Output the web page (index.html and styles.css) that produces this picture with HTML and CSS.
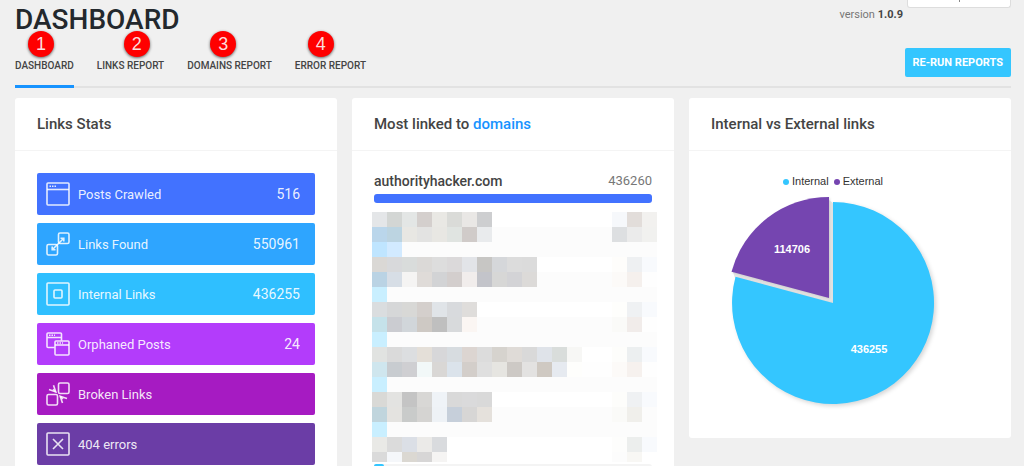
FILE: index.html
```html
<!DOCTYPE html>
<html lang="en">
<head>
<meta charset="utf-8">
<meta name="viewport" content="width=device-width, initial-scale=1">
<title>Dashboard</title>
<link rel="stylesheet" href="styles.css">
</head>
<body>
<header class="top">
  <h1 class="title">DASHBOARD</h1>
  <div class="meta">
    <span class="version">version <b>1.0.9</b></span>
    <button class="ghost" type="button" aria-label="More"></button>
  </div>
</header>

<div class="bar">
  <nav class="tabs">
    <a class="tab active" href="#dashboard"><span class="badge b1">1</span>DASHBOARD</a>
    <a class="tab" href="#links"><span class="badge b2">2</span>LINKS REPORT</a>
    <a class="tab" href="#domains"><span class="badge b3">3</span>DOMAINS REPORT</a>
    <a class="tab" href="#errors"><span class="badge b4">4</span>ERROR REPORT</a>
  </nav>
  <button class="primary" type="button">RE-RUN REPORTS</button>
</div>

<main class="cards">
  <section class="card">
    <h2 class="card-head">Links Stats</h2>
    <ul class="card-body stats">
      <li class="stat posts">
        <svg class="icon" viewBox="0 0 24 24"><rect x="1" y="1" width="22" height="22" rx="1"/><path d="M1 7.500H23"/><path d="M3.500 4.300H10" stroke-dasharray="1.500 1"/></svg>
        <span>Posts Crawled</span><span class="count">516</span>
      </li>
      <li class="stat found">
        <svg class="icon" viewBox="0 0 24 24"><rect x="12.500" y="1" width="10.500" height="10.500" rx="1.500"/><rect x="1" y="12.500" width="10.500" height="10.500" rx="1.500"/><path d="M6 18L18 6M14.500 6.200H17.800V9.500M6.200 14.500V17.800H9.500"/></svg>
        <span>Links Found</span><span class="count">550961</span>
      </li>
      <li class="stat internal">
        <svg class="icon" viewBox="0 0 24 24"><rect x="1" y="1" width="22" height="22" rx="1"/><rect x="8" y="8" width="8" height="8" rx="1"/></svg>
        <span>Internal Links</span><span class="count">436255</span>
      </li>
      <li class="stat orphaned">
        <svg class="icon" viewBox="0 0 24 24"><path d="M8.500 15.500H2a1 1 0 0 1-1-1V2a1 1 0 0 1 1-1H14.500a1 1 0 0 1 1 1V8.500M1 5.500H15.500"/><path d="M3 3.300H9M11 11H17" stroke-dasharray="1.500 1"/><rect x="9" y="9" width="14" height="14" rx="1"/><path d="M9 13H23"/></svg>
        <span>Orphaned Posts</span><span class="count">24</span>
      </li>
      <li class="stat broken">
        <svg class="icon" viewBox="0 0 24 24"><rect x="12.500" y="1" width="10.500" height="10.500" rx="1.500"/><rect x="1" y="12.500" width="10.500" height="10.500" rx="1.500"/><path d="M3 7.500L9.800 10L7.500 3.200M21 16.500L14.200 14.300L16.500 21"/><path d="M9.800 10L7 7.200M14.200 14.300L17 17"/></svg>
        <span>Broken Links</span>
      </li>
      <li class="stat missing">
        <svg class="icon" viewBox="0 0 24 24"><rect x="1" y="1" width="22" height="22" rx="1"/><path d="M7 7L17 17M17 7L7 17"/></svg>
        <span>404 errors</span>
      </li>
    </ul>
  </section>

  <section class="card">
    <h2 class="card-head">Most linked to <a href="#domains">domains</a></h2>
    <div class="card-body">
      <div class="domain"><b>authorityhacker.com</b><span>436260</span></div>
      <div class="meter full"></div>
      <svg class="mosaic" viewBox="0 0 285 250" shape-rendering="crispEdges" aria-hidden="true"></svg>
      <div class="meter small"><div class="fill"></div></div>
    </div>
  </section>

  <section class="card">
    <h2 class="card-head">Internal vs External links</h2>
    <div class="card-body">
      <div class="chart">
        <div class="legend"><span class="key in">Internal</span><span class="key ex">External</span></div>
        <svg class="pie" viewBox="0 0 244 226" role="img" aria-label="Internal 436255, External 114706">
          <path class="gap" d="M118 10L122 13L124 114L24 88L22 82L112 100Z"/>
          <path class="slice-in" d="M122 113V12A101 101 0 1 1 24.500 86.800Z"/>
          <path class="slice-ex" d="M118 108L20.500 81.800A101 101 0 0 1 118 7Z"/>
          <text x="81" y="63">114706</text>
          <text x="158" y="163">436255</text>
        </svg>
      </div>
    </div>
  </section>
</main>
<script src="mosaic.js"></script>
</body>
</html>
```

FILE: styles.css
```css
* { box-sizing: border-box; }

body {
  margin: 0;
  padding: 0 13px 0 15px;
  background: #f0f0f0;
  color: #444;
  font-family: Roboto, "Liberation Sans", sans-serif;
  font-size: 14px;
}

a { text-decoration: none; }

button { font: inherit; border: 0; }

.top {
  display: flex;
  justify-content: space-between;
  height: 39px;
}

.title {
  margin: 0;
  font-size: 28px;
  line-height: 39px;
  font-weight: 500;
  color: #23282d;
}

.meta {
  display: flex;
  align-items: flex-start;
  gap: 4px;
}

.version {
  padding-top: 7px;
  font-size: 11px;
  line-height: 16px;
  color: #777;
}

.version b { color: #444; font-weight: 700; }

.ghost {
  display: flex;
  justify-content: center;
  width: 104px;
  height: 8px;
  padding: 0;
  background: #fff;
  border: 1px solid #ddd;
  border-top: 0;
  border-radius: 0 0 3px 3px;
}

.ghost::before {
  content: "";
  width: 1px;
  height: 2px;
  background: #888;
}

.bar {
  display: flex;
  justify-content: space-between;
  align-items: center;
  height: 49px;
  border-bottom: 2px solid #e2e2e2;
}

.tabs {
  display: flex;
  align-self: stretch;
  gap: 23px;
  margin-bottom: -2px;
}

.tab {
  position: relative;
  padding-top: 19px;
  font-size: 10px;
  line-height: 16px;
  font-weight: 500;
  color: #444;
  white-space: nowrap;
}

.active { border-bottom: 3px solid #1793ff; }

.badge {
  position: absolute;
  top: -8px;
  width: 26px;
  height: 26px;
  border-radius: 50%;
  background: #f00;
  box-shadow: 0 1px 3px rgba(0, 0, 0, .6);
  color: #fbdcdc;
  font: 18px/26px "Liberation Sans", Arial, sans-serif;
  text-align: center;
}

.b1, .b4 { left: 13px; }
.b2 { left: 27px; }
.b3 { left: 23px; }

.primary {
  min-width: 106px;
  height: 29px;
  padding: 0 8px;
  border-radius: 2px;
  background: #34c6ff;
  color: #fff;
  font-size: 11px;
  font-weight: 700;
}

.cards {
  display: grid;
  grid-template-columns: repeat(3, minmax(0, 1fr));
  align-items: start;
  gap: 15px;
  padding-top: 10px;
}

.card {
  background: #fff;
  border-radius: 3px;
}

.card-head {
  margin: 0;
  padding: 16px 22px;
  border-bottom: 1px solid #f4f4f4;
  font-size: 15px;
  line-height: 20px;
  font-weight: 500;
}

.card-head a { color: #1793ff; }

.card-body {
  margin: 0;
  padding: 22px;
}

.stats {
  display: flex;
  flex-direction: column;
  gap: 8px;
  list-style: none;
}

.stat {
  display: flex;
  align-items: center;
  gap: 8px;
  height: 42px;
  padding: 0 15px 0 9px;
  border-radius: 2px;
  color: rgba(255, 255, 255, .9);
  font-size: 13px;
}

.count { margin-left: auto; font-size: 14px; }

.icon {
  width: 24px;
  height: 24px;
  fill: none;
  stroke: #fff;
  stroke-opacity: .85;
  stroke-width: 1.6;
}

.posts { background: #4272ff; }
.found { background: #2ea5ff; }
.internal { background: #2fbfff; }
.orphaned { background: #b33cfb; }
.broken { background: #a61bc2; }
.missing { background: #6b3da6; }

.domain {
  display: flex;
  justify-content: space-between;
  line-height: 16px;
  font-size: 13px;
}

.domain b { font-size: 14px; font-weight: 500; }
.domain span { color: #777; }

.meter { border-radius: 3px; background: #f4f4f4; }
.full { height: 9px; margin: 5px 0 9px; background: #4272ff; }
.small { height: 9px; margin-top: 2px; }
.fill { width: 10px; height: 9px; border-radius: 2px; background: #34c6ff; }

.mosaic {
  display: block;
  width: 285px;
  height: 250px;
  margin: 0 -6px 0 -2px;
}

.chart { width: 244px; max-width: 100%; }

.legend {
  display: flex;
  justify-content: center;
  gap: 5px;
  font: 11px/16px "Liberation Sans", Arial, sans-serif;
  color: #333;
}

.key { display: flex; align-items: center; gap: 3px; }

.key::before {
  content: "";
  width: 6px;
  height: 6px;
  margin-top: 2px;
  border-radius: 50%;
}

.in::before { background: #34c6ff; }
.ex::before { background: #7545b0; }

.pie { display: block; width: 100%; margin-top: 1px; overflow: visible; }
.gap { fill: #e6e6e6; }
.slice-in { fill: #34c6ff; filter: drop-shadow(2px 2px 2px rgba(0, 0, 0, .16)); }
.slice-ex { fill: #7545b0; filter: drop-shadow(1px 1px 1px rgba(0, 0, 0, .12)); }

.pie text {
  fill: #fff;
  font: bold 11px "Liberation Sans", Arial, sans-serif;
  text-anchor: middle;
}
```

FILE: mosaic.js
```js
// Redacted domain rows: leading cells | strip colour | last three cells.
const rows = [
  "e4e6e8 d3d6d4 e3e6e5 d4cfcd e9e8e4 dadbd8 e9e7e5 cdced0|ffffff|f6f8fb e2ddda f2f1ef",
  "bad6eb bcd4e1 e8e7e3 e3e3e2 e8e7e3 e0e4e1 d0cbc9 e9ebed|fcfcfc|dddfe1 ebebeb f1f1ef",
  "bfe5ff d2eaff|fcfcfc|",
  "dad8d5 d8d9db d9dcdb dbd9d7 dddddd dbd9da e2e4e8 c7c6c4 d5d7da dcdcdc dbdbdb|ffffff|fefdfb eef0f2 f8fafd",
  "bad3e4 d7dee6 f5f4f3 dfdbd8 d2d3d5 d3cecd f1edec c3c4ca d7d7d6 d3d3d6 dcdad8|fcfcfc|fcfaf8 f5f0ed fefefe",
  "c9efff|fcfcfc|",
  "dadddf d6d7d8 d8d8d6 d4cfcc e0e4e8 d8dadd dfdddb|ffffff|fefefc eff1f3 f8fafd",
  "c5e2ea cbccd1 d1d6da cec9c4 bfbfbf d8dadc fbf6f3|fcfcfc|fafaf8 f1ecea fefefe",
  "c9efff|fcfcfc|",
  "e1e3e1 dadada dcdee0 e4dfd8 d7d7d9 d7dce0 dcd5d1 dcdcdc d6d3ce dfdbd7 d9d9d9 dfe3e9 d9dddb f7f7f5|ffffff|fdfdfb eceff0 f8fafd",
  "cfe6ee c8ccd0 cfcfd2 f2f8f8 d9d7d5 dbe3eb d3ceca dfdfdf e6e5e1 cdc9c5 e3e2e1 cfc9c2 e6eaf0 fefefc|fefefe|fcfaf8 f6f1ee fefefe",
  "c9efff|fcfcfc|",
  "d9d9d6 e3e3e1 c4c4c4 d8d7d5 eff3f7 d9d9d9 dadadb d9d9d9|ffffff|fdfdfb eff1f3 f8fafd",
  "c0d5dd e4e3e0 c9cbca d5d4d2 eef2f6 c6cfda d7d6d5 e5e1dc|fcfcfc|fafaf8 f0efeb fcfcfc",
  "c9efff|fcfcfc|",
  "e9e9e6 dbdbdb dbdfe6 ebeae8 d9dbde|ffffff|fdfdfc eceeed f8fafd",
  "dadada f5f7fa dbd8d2 d7d6d6 f5f4f3|ffffff|fcfcfc f8f7f4 ffffff"
];

const cell = 15;
const columns = 19;
const mosaic = document.querySelector(".mosaic");

function paint(column, row, span, colour) {
  const rect = document.createElementNS("http://www.w3.org/2000/svg", "rect");
  rect.setAttribute("x", column * cell);
  rect.setAttribute("y", row * cell);
  rect.setAttribute("width", span * cell);
  rect.setAttribute("height", cell);
  rect.setAttribute("fill", "#" + colour);
  mosaic.append(rect);
}

rows.forEach((line, row) => {
  const [lead, strip, tail] = line.split("|");
  paint(0, row, columns, strip);
  lead.split(" ").forEach((colour, i) => paint(i, row, 1, colour));
  tail.split(" ").filter(Boolean).forEach((colour, i) => paint(columns - 3 + i, row, 1, colour));
});
```
